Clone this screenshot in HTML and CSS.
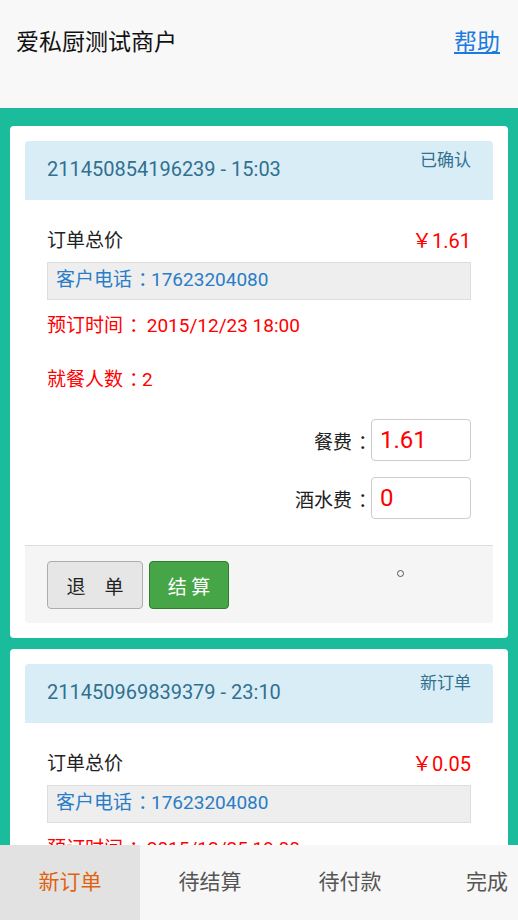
FILE: index.html
```html
<!DOCTYPE html>
<html lang="zh-CN">
<head>
    <meta charset="UTF-8">
    <title>爱私厨测试商户</title>
    <link rel="stylesheet" href="styles.css">
</head>
<body>

<header class="topbar">
    <h1>爱私厨测试商户</h1>
    <a href="#" class="help">帮助</a>
</header>

<div class="orders">
    <div class="card">
        <div class="card-head">
            <span class="order-no">211450854196239 - 15:03</span>
            <span class="status">已确认</span>
        </div>
        <div class="card-body">
            <div class="total">
                <span>订单总价</span>
                <span class="price">￥1.61</span>
            </div>
            <div class="phone">客户电话<span class="colon">：</span>17623204080</div>
            <p class="red">预订时间<span class="colon">：</span> 2015/12/23 18:00</p>
            <p class="red people">就餐人数<span class="colon">：</span>2</p>
            <div class="fee">
                <label>餐费<span class="colon">：</span></label>
                <input type="text" value="1.61">
            </div>
            <div class="fee">
                <label>酒水费<span class="colon">：</span></label>
                <input type="text" value="0">
            </div>
        </div>
        <div class="card-foot">
            <button class="btn btn-cancel">退&nbsp;&nbsp;&nbsp;&nbsp;单</button>
            <button class="btn btn-pay">结 算</button>
            <span class="dot"></span>
        </div>
    </div>

    <div class="card">
        <div class="card-head">
            <span class="order-no">211450969839379 - 23:10</span>
            <span class="status">新订单</span>
        </div>
        <div class="card-body">
            <div class="total">
                <span>订单总价</span>
                <span class="price">￥0.05</span>
            </div>
            <div class="phone">客户电话<span class="colon">：</span>17623204080</div>
            <p class="red">预订时间<span class="colon">：</span> 2015/12/25 19:00</p>
        </div>
    </div>
</div>

<nav class="tabs">
    <a href="#" class="tab active">新订单</a>
    <a href="#" class="tab">待结算</a>
    <a href="#" class="tab">待付款</a>
    <a href="#" class="tab">完成</a>
</nav>

</body>
</html>
```

FILE: styles.css
```css
body {
    font-family: Roboto, "Noto Sans CJK SC", sans-serif;
    margin: 0;
    color: #222;
    background-color: #1abc9c;
    height: 920px;
    overflow: hidden;
    display: flex;
    flex-direction: column;
}
/* centre the full-width colon in its em box, as the phone font does */
.colon {
    padding-left: 0.32em;
    letter-spacing: -0.32em;
}
.topbar {
    flex: 0 0 108px;
    box-sizing: border-box;
    background-color: #f8f8f8;
    display: flex;
    justify-content: space-between;
    align-items: flex-start;
    padding: 28px 18px 0 16px;
}
.topbar h1 {
    margin: 0;
    font-size: 23px;
    font-weight: normal;
    line-height: 30px;
    color: #111;
}
.help {
    font-size: 23px;
    line-height: 30px;
    color: #1a7be0;
}
.orders {
    flex: 1;
    overflow: hidden;
    padding: 18px 10px 0;
}
.card {
    background: #ffffff;
    border-radius: 4px;
    padding: 15px;
    margin-bottom: 11px;
}
.card-head {
    height: 59px;
    box-sizing: border-box;
    background-color: #d9edf7;
    border-radius: 4px 4px 0 0;
    color: #31708f;
    display: flex;
    justify-content: space-between;
    align-items: flex-start;
    padding: 0 22px;
}
.order-no {
    font-size: 20px;
    line-height: 24px;
    margin-top: 16px;
}
.status {
    font-size: 17px;
    line-height: 22px;
    margin-top: 8px;
}
.card-body {
    padding: 28px 22px 0;
}
.total {
    display: flex;
    justify-content: space-between;
    font-size: 19px;
    line-height: 26px;
}
.price {
    color: #f00;
    font-size: 20px;
}
.phone {
    margin-top: 8px;
    height: 38px;
    box-sizing: border-box;
    background: #eee;
    border: 1px solid #ddd;
    color: #2a7dc6;
    font-size: 19px;
    line-height: 34px;
    padding-left: 8px;
}
.red {
    color: #f00;
    font-size: 19px;
    line-height: 24px;
    margin: 14px 0 0;
}
.people {
    margin-top: 30px;
}
.fee {
    display: flex;
    justify-content: flex-end;
    align-items: center;
    margin-top: 16px;
}
.people + .fee {
    margin-top: 27px;
}
.fee label {
    font-size: 19px;
    color: #222;
    white-space: nowrap;
}
.fee input {
    width: 100px;
    height: 42px;
    box-sizing: border-box;
    border: 1px solid #ccc;
    border-radius: 4px;
    padding: 0 8px;
    font-family: Roboto, sans-serif;
    font-size: 24px;
    color: #f00;
}
.card-foot {
    margin-top: 26px;
    background: #f5f5f5;
    border-top: 1px solid #ddd;
    padding: 15px 22px 14px;
    display: flex;
    gap: 6px;
    align-items: flex-start;
    border-radius: 0 0 4px 4px;
}
.btn {
    height: 48px;
    font-family: Roboto, "Noto Sans CJK SC", sans-serif;
    font-size: 19px;
    border-radius: 4px;
    padding: 0 14px;
    cursor: pointer;
}
.btn-cancel {
    width: 96px;
    background: #e6e6e6;
    border: 1px solid #adadad;
    color: #222;
}
.btn-pay {
    width: 80px;
    background: #46a546;
    border: 1px solid #2d7d2d;
    color: #fff;
}
.dot {
    width: 5px;
    height: 5px;
    border: 1.5px solid #556;
    border-radius: 50%;
    margin: 9px 0 0 162px;
}
.tabs {
    flex: 0 0 75px;
    background: #f7f7f7;
    display: flex;
    overflow: hidden;
}
.tab {
    flex: 0 0 140px;
    text-align: center;
    line-height: 75px;
    font-size: 21px;
    color: #555;
    text-decoration: none;
}
.tab:last-child {
    flex-basis: 134px;
}
.tab.active {
    background: #e2e2e2;
    color: #e0620d;
}
```
